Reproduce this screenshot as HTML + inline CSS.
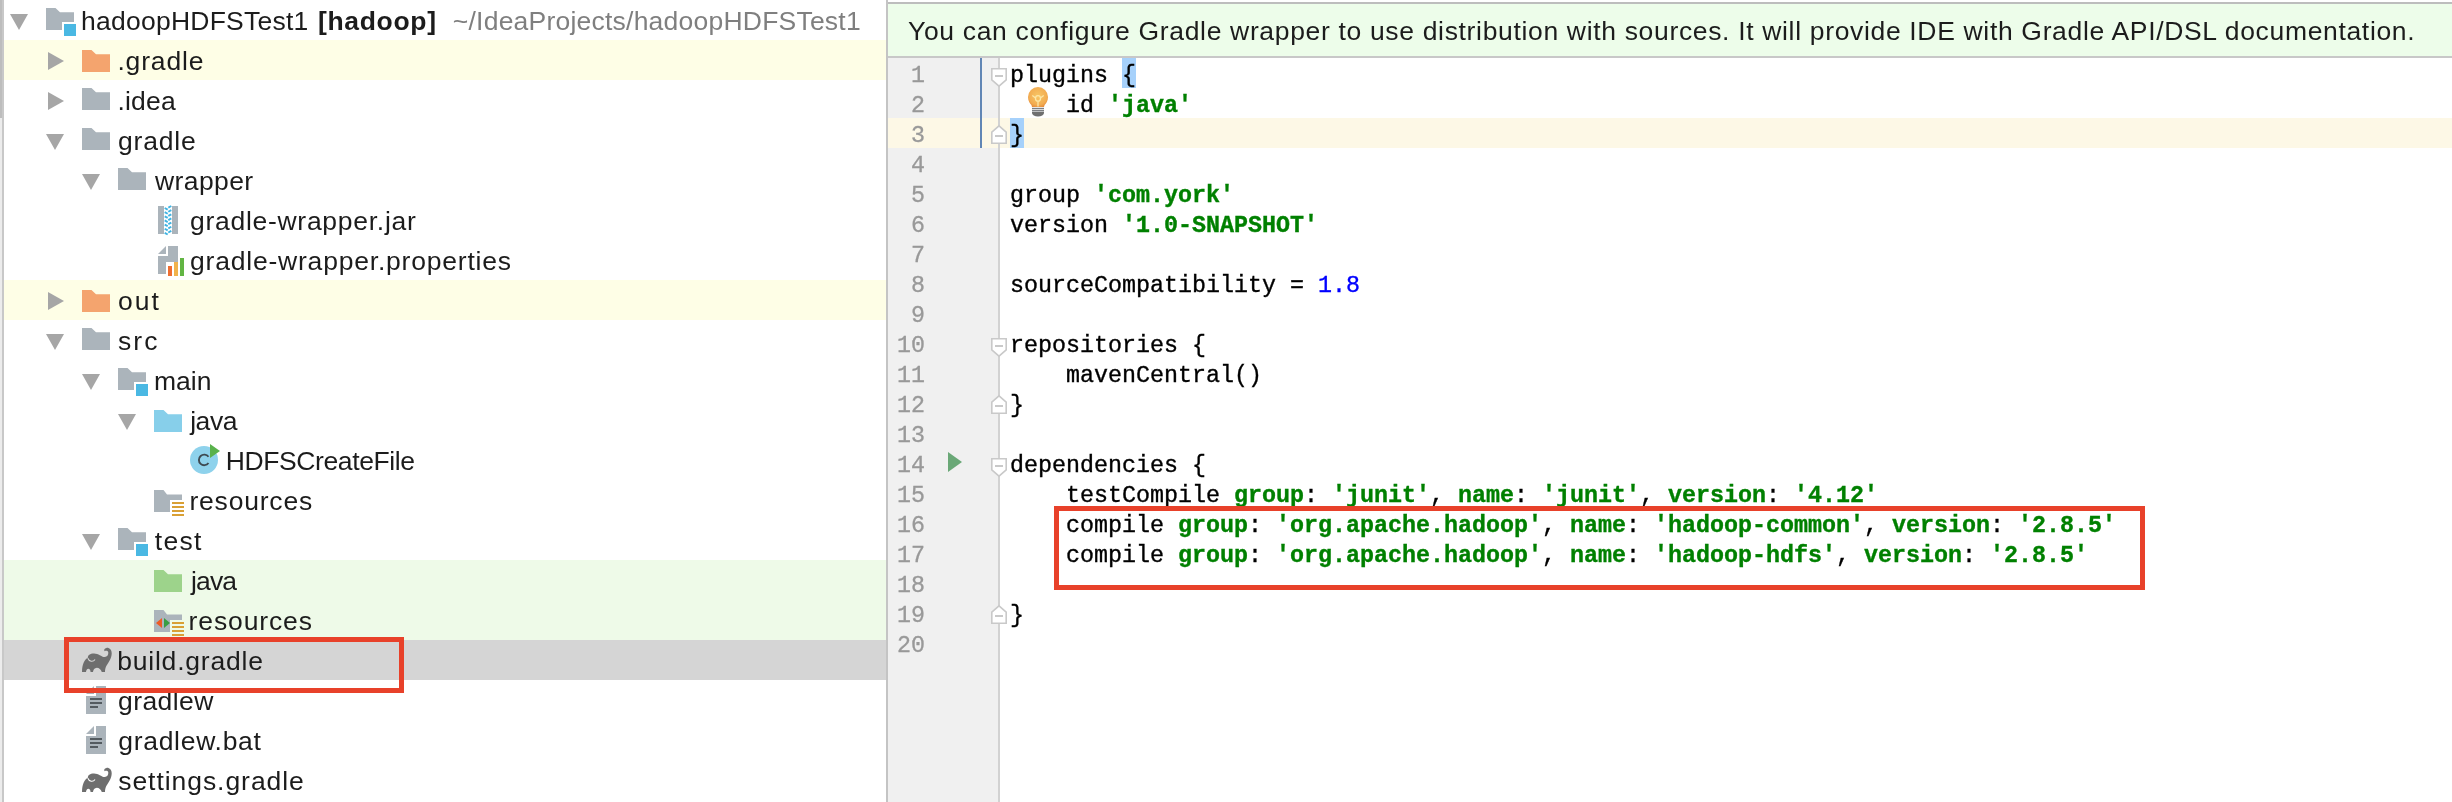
<!DOCTYPE html>
<html><head><meta charset="utf-8"><title>IDE</title>
<style>html,body{margin:0;padding:0}body{width:2452px;height:802px;overflow:hidden;position:relative;background:#fff}#r{position:absolute;left:0;top:0;width:2452px;height:802px;will-change:transform}b{font-weight:700}</style>
</head><body><div id="r">
<div style="position:absolute;left:0px;top:0px;width:2px;height:118px;background:#bdbdbd;"></div><div style="position:absolute;left:0px;top:118px;width:2px;height:684px;background:#ececec;"></div><div style="position:absolute;left:2px;top:0px;width:2px;height:802px;background:#c8c8c8;"></div><div style="position:absolute;left:4px;top:40px;width:882px;height:40px;background:#fefee6;"></div><div style="position:absolute;left:4px;top:280px;width:882px;height:40px;background:#fefee6;"></div><div style="position:absolute;left:4px;top:560px;width:882px;height:80px;background:#eefae8;"></div><div style="position:absolute;left:4px;top:640px;width:882px;height:40px;background:#d5d5d5;"></div><div style="position:absolute;left:886px;top:0px;width:2px;height:802px;background:#c4c4c4;"></div><svg style="position:absolute;left:0;top:0" width="886" height="802"><path d="M10 14h18l-9 16z" fill="#a6a6a6"/><path d="M46 8h9.5l4.5 4.2h14v9.8h-12v8h-16z" fill="#abb4bb"/><rect x="64" y="24" width="12" height="12" fill="#4ab8e3"/><path d="M48 52v18l16 -9z" fill="#a6a6a6"/><path d="M82 50h9.5l4.5 4.2h14v17.8h-28z" fill="#f4a46e"/><path d="M48 92v18l16 -9z" fill="#a6a6a6"/><path d="M82 88h9.5l4.5 4.2h14v17.8h-28z" fill="#abb4bb"/><path d="M46 134h18l-9 16z" fill="#a6a6a6"/><path d="M82 128h9.5l4.5 4.2h14v17.8h-28z" fill="#abb4bb"/><path d="M82 174h18l-9 16z" fill="#a6a6a6"/><path d="M118 168h9.5l4.5 4.2h14v17.8h-28z" fill="#abb4bb"/><rect x="158" y="206" width="6" height="28" fill="#abb4bb"/><rect x="172" y="206" width="6" height="28" fill="#abb4bb"/><path d="M164.7 208.0l3 1.6" stroke="#3fb4e3" stroke-width="1.9"/><path d="M164.7 212.15l3 1.6" stroke="#3fb4e3" stroke-width="1.9"/><path d="M164.7 216.3l3 1.6" stroke="#3fb4e3" stroke-width="1.9"/><path d="M164.7 220.45l3 1.6" stroke="#3fb4e3" stroke-width="1.9"/><path d="M164.7 224.6l3 1.6" stroke="#3fb4e3" stroke-width="1.9"/><path d="M164.7 228.75l3 1.6" stroke="#3fb4e3" stroke-width="1.9"/><path d="M164.7 232.9l3 1.6" stroke="#3fb4e3" stroke-width="1.9"/><path d="M168.3 207.6l3 -1.6" stroke="#3fb4e3" stroke-width="1.9"/><path d="M168.3 211.75l3 -1.6" stroke="#3fb4e3" stroke-width="1.9"/><path d="M168.3 215.9l3 -1.6" stroke="#3fb4e3" stroke-width="1.9"/><path d="M168.3 220.04999999999998l3 -1.6" stroke="#3fb4e3" stroke-width="1.9"/><path d="M168.3 224.2l3 -1.6" stroke="#3fb4e3" stroke-width="1.9"/><path d="M168.3 228.35l3 -1.6" stroke="#3fb4e3" stroke-width="1.9"/><path d="M168.3 232.5l3 -1.6" stroke="#3fb4e3" stroke-width="1.9"/><path d="M158 254l8 -8v8z" fill="#abb4bb"/><path d="M168 246h10v16h-12v12h-8v-18h10z" fill="#abb4bb"/><rect x="168" y="266" width="4" height="10" fill="#ee6e32"/><rect x="174" y="262" width="4" height="14" fill="#f1b34c"/><rect x="180" y="258" width="4" height="18" fill="#62b543"/><path d="M48 292v18l16 -9z" fill="#a6a6a6"/><path d="M82 290h9.5l4.5 4.2h14v17.8h-28z" fill="#f4a46e"/><path d="M46 334h18l-9 16z" fill="#a6a6a6"/><path d="M82 328h9.5l4.5 4.2h14v17.8h-28z" fill="#abb4bb"/><path d="M82 374h18l-9 16z" fill="#a6a6a6"/><path d="M118 368h9.5l4.5 4.2h14v9.8h-12v8h-16z" fill="#abb4bb"/><rect x="136" y="384" width="12" height="12" fill="#4ab8e3"/><path d="M118 414h18l-9 16z" fill="#a6a6a6"/><path d="M154 410h9.5l4.5 4.2h14v17.8h-28z" fill="#87cfea"/><circle cx="204" cy="460" r="14" fill="#8ed2ec"/><path d="M208.5 456.8a5.3 5.3 0 1 0 0 6.2" fill="none" stroke="#3e4a52" stroke-width="1.9"/><path d="M210 444l10 7l-10 7z" fill="#59b24c"/><path d="M154 490h9.5l3.5 4.5h15v5.5h-12v12h-16z" fill="#abb4bb"/><rect x="172" y="502" width="12" height="2" fill="#d9a035"/><rect x="172" y="506" width="12" height="2" fill="#d9a035"/><rect x="172" y="510" width="12" height="2" fill="#d9a035"/><rect x="172" y="514" width="12" height="2" fill="#d9a035"/><path d="M82 534h18l-9 16z" fill="#a6a6a6"/><path d="M118 528h9.5l4.5 4.2h14v9.8h-12v8h-16z" fill="#abb4bb"/><rect x="136" y="544" width="12" height="12" fill="#4ab8e3"/><path d="M154 570h9.5l4.5 4.2h14v17.8h-28z" fill="#9dd38b"/><path d="M154 610h9.5l3.5 4.5h15v5.5h-12v12h-16z" fill="#abb4bb"/><rect x="172" y="622" width="12" height="2" fill="#d9a035"/><rect x="172" y="626" width="12" height="2" fill="#d9a035"/><rect x="172" y="630" width="12" height="2" fill="#d9a035"/><rect x="172" y="634" width="12" height="2" fill="#d9a035"/><path d="M156 623l6 -5v10z" fill="#ee5a24"/><path d="M170 623l-6 -5v10z" fill="#389e43"/><g transform="translate(0 0)"><path d="M82 672 C82 665 84 660 88 657.6 C87.6 655 90 653.4 94 653.4 C98.5 653.4 101.5 656.8 104.5 657 C107 657.2 108.4 655 108.3 652.8 C108.2 651 106.5 650.4 104.6 651.2 C103.8 650 104.2 648.2 106.5 647.9 C109.5 647.6 111.8 650 111.7 653.5 C111.6 658.5 108.5 662.5 106.3 666 C105.3 667.8 105 670 105 672 H101.8 C101 669.5 99 667.8 96.8 667.8 C94.5 667.8 93.2 670 93 672 H90.6 C90.4 670 89.5 668.8 88.3 668.8 C87 668.8 86.2 670.5 86 672 Z" fill="#6e6e6e"/><path d="M87.8 658.2 C89 661.8 93.2 662.2 95 659.5" fill="none" stroke="#d5d5d5" stroke-width="1.1"/></g><path d="M86 694l8 -8v8z" fill="#abb4bb"/><path d="M96 686h10v28h-20v-18h10z" fill="#abb4bb"/><rect x="90" y="698" width="12" height="2" fill="#545b60"/><rect x="90" y="702" width="12" height="2" fill="#545b60"/><rect x="90" y="706" width="8" height="2" fill="#545b60"/><path d="M86 734l8 -8v8z" fill="#abb4bb"/><path d="M96 726h10v28h-20v-18h10z" fill="#abb4bb"/><rect x="90" y="738" width="12" height="2" fill="#545b60"/><rect x="90" y="742" width="12" height="2" fill="#545b60"/><rect x="90" y="746" width="8" height="2" fill="#545b60"/><g transform="translate(0 120)"><path d="M82 672 C82 665 84 660 88 657.6 C87.6 655 90 653.4 94 653.4 C98.5 653.4 101.5 656.8 104.5 657 C107 657.2 108.4 655 108.3 652.8 C108.2 651 106.5 650.4 104.6 651.2 C103.8 650 104.2 648.2 106.5 647.9 C109.5 647.6 111.8 650 111.7 653.5 C111.6 658.5 108.5 662.5 106.3 666 C105.3 667.8 105 670 105 672 H101.8 C101 669.5 99 667.8 96.8 667.8 C94.5 667.8 93.2 670 93 672 H90.6 C90.4 670 89.5 668.8 88.3 668.8 C87 668.8 86.2 670.5 86 672 Z" fill="#6e6e6e"/><path d="M87.8 658.2 C89 661.8 93.2 662.2 95 659.5" fill="none" stroke="#ffffff" stroke-width="1.1"/></g></svg><div style="position:absolute;left:81.00px;top:1px;height:40px;line-height:40px;font-family:'Liberation Sans',sans-serif;font-size:26.5px;white-space:pre;color:#1c1c1c;letter-spacing:0.243px;">hadoopHDFSTest1</div><div style="position:absolute;left:318.00px;top:1px;height:40px;line-height:40px;font-family:'Liberation Sans',sans-serif;font-size:26.5px;white-space:pre;color:#1c1c1c;letter-spacing:0.662px;font-weight:700;">[hadoop]</div><div style="position:absolute;left:452.80px;top:1px;height:40px;line-height:40px;font-family:'Liberation Sans',sans-serif;font-size:26.5px;white-space:pre;color:#7f7f7f;letter-spacing:0.223px;">~/IdeaProjects/hadoopHDFSTest1</div><div style="position:absolute;left:117.40px;top:41px;height:40px;line-height:40px;font-family:'Liberation Sans',sans-serif;font-size:26.5px;white-space:pre;color:#1c1c1c;letter-spacing:0.832px;">.gradle</div><div style="position:absolute;left:117.40px;top:81px;height:40px;line-height:40px;font-family:'Liberation Sans',sans-serif;font-size:26.5px;white-space:pre;color:#1c1c1c;letter-spacing:0.200px;">.idea</div><div style="position:absolute;left:118.00px;top:121px;height:40px;line-height:40px;font-family:'Liberation Sans',sans-serif;font-size:26.5px;white-space:pre;color:#1c1c1c;letter-spacing:0.800px;">gradle</div><div style="position:absolute;left:155.00px;top:161px;height:40px;line-height:40px;font-family:'Liberation Sans',sans-serif;font-size:26.5px;white-space:pre;color:#1c1c1c;letter-spacing:0.402px;">wrapper</div><div style="position:absolute;left:190.00px;top:201px;height:40px;line-height:40px;font-family:'Liberation Sans',sans-serif;font-size:26.5px;white-space:pre;color:#1c1c1c;letter-spacing:0.718px;">gradle-wrapper.jar</div><div style="position:absolute;left:190.00px;top:241px;height:40px;line-height:40px;font-family:'Liberation Sans',sans-serif;font-size:26.5px;white-space:pre;color:#1c1c1c;letter-spacing:0.796px;">gradle-wrapper.properties</div><div style="position:absolute;left:118.00px;top:281px;height:40px;line-height:40px;font-family:'Liberation Sans',sans-serif;font-size:26.5px;white-space:pre;color:#1c1c1c;letter-spacing:2.000px;">out</div><div style="position:absolute;left:118.00px;top:321px;height:40px;line-height:40px;font-family:'Liberation Sans',sans-serif;font-size:26.5px;white-space:pre;color:#1c1c1c;letter-spacing:2.100px;">src</div><div style="position:absolute;left:154.00px;top:361px;height:40px;line-height:40px;font-family:'Liberation Sans',sans-serif;font-size:26.5px;white-space:pre;color:#1c1c1c;letter-spacing:0.003px;">main</div><div style="position:absolute;left:190.20px;top:401px;height:40px;line-height:40px;font-family:'Liberation Sans',sans-serif;font-size:26.5px;white-space:pre;color:#1c1c1c;letter-spacing:-0.462px;">java</div><div style="position:absolute;left:225.80px;top:441px;height:40px;line-height:40px;font-family:'Liberation Sans',sans-serif;font-size:26.5px;white-space:pre;color:#1c1c1c;letter-spacing:-0.400px;">HDFSCreateFile</div><div style="position:absolute;left:189.40px;top:481px;height:40px;line-height:40px;font-family:'Liberation Sans',sans-serif;font-size:26.5px;white-space:pre;color:#1c1c1c;letter-spacing:0.808px;">resources</div><div style="position:absolute;left:154.80px;top:521px;height:40px;line-height:40px;font-family:'Liberation Sans',sans-serif;font-size:26.5px;white-space:pre;color:#1c1c1c;letter-spacing:1.270px;">test</div><div style="position:absolute;left:191.00px;top:561px;height:40px;line-height:40px;font-family:'Liberation Sans',sans-serif;font-size:26.5px;white-space:pre;color:#1c1c1c;letter-spacing:-0.871px;">java</div><div style="position:absolute;left:188.60px;top:601px;height:40px;line-height:40px;font-family:'Liberation Sans',sans-serif;font-size:26.5px;white-space:pre;color:#1c1c1c;letter-spacing:0.875px;">resources</div><div style="position:absolute;left:117.20px;top:641px;height:40px;line-height:40px;font-family:'Liberation Sans',sans-serif;font-size:26.5px;white-space:pre;color:#1c1c1c;letter-spacing:0.793px;">build.gradle</div><div style="position:absolute;left:118.00px;top:681px;height:40px;line-height:40px;font-family:'Liberation Sans',sans-serif;font-size:26.5px;white-space:pre;color:#1c1c1c;letter-spacing:0.435px;">gradlew</div><div style="position:absolute;left:118.20px;top:721px;height:40px;line-height:40px;font-family:'Liberation Sans',sans-serif;font-size:26.5px;white-space:pre;color:#1c1c1c;letter-spacing:0.720px;">gradlew.bat</div><div style="position:absolute;left:118.20px;top:761px;height:40px;line-height:40px;font-family:'Liberation Sans',sans-serif;font-size:26.5px;white-space:pre;color:#1c1c1c;letter-spacing:0.949px;">settings.gradle</div><div style="position:absolute;left:64px;top:637px;width:330px;height:46px;border:5px solid #e8412a"></div><div style="position:absolute;left:888px;top:0px;width:1564px;height:2px;background:#ffffff;"></div><div style="position:absolute;left:888px;top:2px;width:1564px;height:2px;background:#bdbdbd;"></div><div style="position:absolute;left:888px;top:4px;width:1564px;height:52px;background:#edfdea;"></div><div style="position:absolute;left:888px;top:56px;width:1564px;height:2px;background:#c8c8c8;"></div><div style="position:absolute;left:908.00px;top:11px;line-height:40px;font-family:'Liberation Sans',sans-serif;font-size:26.5px;letter-spacing:0.665px;white-space:pre;color:#1c1c1c">You can configure Gradle wrapper to use distribution with sources. It will provide IDE with Gradle API/DSL documentation.</div><div style="position:absolute;left:888px;top:58px;width:110px;height:744px;background:#f0f0f0;"></div><div style="position:absolute;left:888px;top:118px;width:1564px;height:30px;background:#fdf8e6;"></div><div style="position:absolute;left:1122px;top:58px;width:14px;height:30px;background:#a6d1fb;"></div><div style="position:absolute;left:1010px;top:118px;width:14px;height:30px;background:#a6d1fb;"></div><div style="position:absolute;left:980px;top:58px;width:2px;height:90px;background:#6186b5;"></div><div style="position:absolute;left:998px;top:58px;width:2px;height:744px;background:#d2d2d2;"></div><div style="position:absolute;right:1527px;top:61px;line-height:30px;font-family:'Liberation Mono',monospace;font-size:23.33px;color:#999999;-webkit-text-stroke:0.3px">1</div><div style="position:absolute;right:1527px;top:91px;line-height:30px;font-family:'Liberation Mono',monospace;font-size:23.33px;color:#999999;-webkit-text-stroke:0.3px">2</div><div style="position:absolute;right:1527px;top:121px;line-height:30px;font-family:'Liberation Mono',monospace;font-size:23.33px;color:#999999;-webkit-text-stroke:0.3px">3</div><div style="position:absolute;right:1527px;top:151px;line-height:30px;font-family:'Liberation Mono',monospace;font-size:23.33px;color:#999999;-webkit-text-stroke:0.3px">4</div><div style="position:absolute;right:1527px;top:181px;line-height:30px;font-family:'Liberation Mono',monospace;font-size:23.33px;color:#999999;-webkit-text-stroke:0.3px">5</div><div style="position:absolute;right:1527px;top:211px;line-height:30px;font-family:'Liberation Mono',monospace;font-size:23.33px;color:#999999;-webkit-text-stroke:0.3px">6</div><div style="position:absolute;right:1527px;top:241px;line-height:30px;font-family:'Liberation Mono',monospace;font-size:23.33px;color:#999999;-webkit-text-stroke:0.3px">7</div><div style="position:absolute;right:1527px;top:271px;line-height:30px;font-family:'Liberation Mono',monospace;font-size:23.33px;color:#999999;-webkit-text-stroke:0.3px">8</div><div style="position:absolute;right:1527px;top:301px;line-height:30px;font-family:'Liberation Mono',monospace;font-size:23.33px;color:#999999;-webkit-text-stroke:0.3px">9</div><div style="position:absolute;right:1527px;top:331px;line-height:30px;font-family:'Liberation Mono',monospace;font-size:23.33px;color:#999999;-webkit-text-stroke:0.3px">10</div><div style="position:absolute;right:1527px;top:361px;line-height:30px;font-family:'Liberation Mono',monospace;font-size:23.33px;color:#999999;-webkit-text-stroke:0.3px">11</div><div style="position:absolute;right:1527px;top:391px;line-height:30px;font-family:'Liberation Mono',monospace;font-size:23.33px;color:#999999;-webkit-text-stroke:0.3px">12</div><div style="position:absolute;right:1527px;top:421px;line-height:30px;font-family:'Liberation Mono',monospace;font-size:23.33px;color:#999999;-webkit-text-stroke:0.3px">13</div><div style="position:absolute;right:1527px;top:451px;line-height:30px;font-family:'Liberation Mono',monospace;font-size:23.33px;color:#999999;-webkit-text-stroke:0.3px">14</div><div style="position:absolute;right:1527px;top:481px;line-height:30px;font-family:'Liberation Mono',monospace;font-size:23.33px;color:#999999;-webkit-text-stroke:0.3px">15</div><div style="position:absolute;right:1527px;top:511px;line-height:30px;font-family:'Liberation Mono',monospace;font-size:23.33px;color:#999999;-webkit-text-stroke:0.3px">16</div><div style="position:absolute;right:1527px;top:541px;line-height:30px;font-family:'Liberation Mono',monospace;font-size:23.33px;color:#999999;-webkit-text-stroke:0.3px">17</div><div style="position:absolute;right:1527px;top:571px;line-height:30px;font-family:'Liberation Mono',monospace;font-size:23.33px;color:#999999;-webkit-text-stroke:0.3px">18</div><div style="position:absolute;right:1527px;top:601px;line-height:30px;font-family:'Liberation Mono',monospace;font-size:23.33px;color:#999999;-webkit-text-stroke:0.3px">19</div><div style="position:absolute;right:1527px;top:631px;line-height:30px;font-family:'Liberation Mono',monospace;font-size:23.33px;color:#999999;-webkit-text-stroke:0.3px">20</div><div style="position:absolute;left:1010px;top:58px;height:30px;line-height:30px;font-family:'Liberation Mono',monospace;font-size:23.33px;white-space:pre;color:#000;-webkit-text-stroke:0.35px"><div style="position:relative;top:3px">plugins {</div></div><div style="position:absolute;left:1010px;top:88px;height:30px;line-height:30px;font-family:'Liberation Mono',monospace;font-size:23.33px;white-space:pre;color:#000;-webkit-text-stroke:0.35px"><div style="position:relative;top:3px">    id <b style="color:#008000">'java'</b></div></div><div style="position:absolute;left:1010px;top:118px;height:30px;line-height:30px;font-family:'Liberation Mono',monospace;font-size:23.33px;white-space:pre;color:#000;-webkit-text-stroke:0.35px"><div style="position:relative;top:3px">}</div></div><div style="position:absolute;left:1010px;top:178px;height:30px;line-height:30px;font-family:'Liberation Mono',monospace;font-size:23.33px;white-space:pre;color:#000;-webkit-text-stroke:0.35px"><div style="position:relative;top:3px">group <b style="color:#008000">'com.york'</b></div></div><div style="position:absolute;left:1010px;top:208px;height:30px;line-height:30px;font-family:'Liberation Mono',monospace;font-size:23.33px;white-space:pre;color:#000;-webkit-text-stroke:0.35px"><div style="position:relative;top:3px">version <b style="color:#008000">'1.0-SNAPSHOT'</b></div></div><div style="position:absolute;left:1010px;top:268px;height:30px;line-height:30px;font-family:'Liberation Mono',monospace;font-size:23.33px;white-space:pre;color:#000;-webkit-text-stroke:0.35px"><div style="position:relative;top:3px">sourceCompatibility = <span style="color:#0000ff">1.8</span></div></div><div style="position:absolute;left:1010px;top:328px;height:30px;line-height:30px;font-family:'Liberation Mono',monospace;font-size:23.33px;white-space:pre;color:#000;-webkit-text-stroke:0.35px"><div style="position:relative;top:3px">repositories {</div></div><div style="position:absolute;left:1010px;top:358px;height:30px;line-height:30px;font-family:'Liberation Mono',monospace;font-size:23.33px;white-space:pre;color:#000;-webkit-text-stroke:0.35px"><div style="position:relative;top:3px">    mavenCentral()</div></div><div style="position:absolute;left:1010px;top:388px;height:30px;line-height:30px;font-family:'Liberation Mono',monospace;font-size:23.33px;white-space:pre;color:#000;-webkit-text-stroke:0.35px"><div style="position:relative;top:3px">}</div></div><div style="position:absolute;left:1010px;top:448px;height:30px;line-height:30px;font-family:'Liberation Mono',monospace;font-size:23.33px;white-space:pre;color:#000;-webkit-text-stroke:0.35px"><div style="position:relative;top:3px">dependencies {</div></div><div style="position:absolute;left:1010px;top:478px;height:30px;line-height:30px;font-family:'Liberation Mono',monospace;font-size:23.33px;white-space:pre;color:#000;-webkit-text-stroke:0.35px"><div style="position:relative;top:3px">    testCompile <b style="color:#008000">group</b>: <b style="color:#008000">'junit'</b>, <b style="color:#008000">name</b>: <b style="color:#008000">'junit'</b>, <b style="color:#008000">version</b>: <b style="color:#008000">'4.12'</b></div></div><div style="position:absolute;left:1010px;top:508px;height:30px;line-height:30px;font-family:'Liberation Mono',monospace;font-size:23.33px;white-space:pre;color:#000;-webkit-text-stroke:0.35px"><div style="position:relative;top:3px">    compile <b style="color:#008000">group</b>: <b style="color:#008000">'org.apache.hadoop'</b>, <b style="color:#008000">name</b>: <b style="color:#008000">'hadoop-common'</b>, <b style="color:#008000">version</b>: <b style="color:#008000">'2.8.5'</b></div></div><div style="position:absolute;left:1010px;top:538px;height:30px;line-height:30px;font-family:'Liberation Mono',monospace;font-size:23.33px;white-space:pre;color:#000;-webkit-text-stroke:0.35px"><div style="position:relative;top:3px">    compile <b style="color:#008000">group</b>: <b style="color:#008000">'org.apache.hadoop'</b>, <b style="color:#008000">name</b>: <b style="color:#008000">'hadoop-hdfs'</b>, <b style="color:#008000">version</b>: <b style="color:#008000">'2.8.5'</b></div></div><div style="position:absolute;left:1010px;top:598px;height:30px;line-height:30px;font-family:'Liberation Mono',monospace;font-size:23.33px;white-space:pre;color:#000;-webkit-text-stroke:0.35px"><div style="position:relative;top:3px">}</div></div><svg style="position:absolute;left:0;top:0" width="2452" height="802"><path d="M991.8 68.8h14.4v11l-7.2 6.4l-7.2 -6.4z" fill="#fff" stroke="#c9c9c9" stroke-width="1.6"/><rect x="995" y="75" width="8" height="2" fill="#c9c9c9"/><path d="M991.8 338.8h14.4v11l-7.2 6.4l-7.2 -6.4z" fill="#fff" stroke="#c9c9c9" stroke-width="1.6"/><rect x="995" y="345" width="8" height="2" fill="#c9c9c9"/><path d="M991.8 458.8h14.4v11l-7.2 6.4l-7.2 -6.4z" fill="#fff" stroke="#c9c9c9" stroke-width="1.6"/><rect x="995" y="465" width="8" height="2" fill="#c9c9c9"/><path d="M991.8 143.2h14.4v-11l-7.2 -6.4l-7.2 6.4z" fill="#fff" stroke="#c9c9c9" stroke-width="1.6"/><rect x="995" y="135" width="8" height="2" fill="#c9c9c9"/><path d="M991.8 413.2h14.4v-11l-7.2 -6.4l-7.2 6.4z" fill="#fff" stroke="#c9c9c9" stroke-width="1.6"/><rect x="995" y="405" width="8" height="2" fill="#c9c9c9"/><path d="M991.8 623.2h14.4v-11l-7.2 -6.4l-7.2 6.4z" fill="#fff" stroke="#c9c9c9" stroke-width="1.6"/><rect x="995" y="615" width="8" height="2" fill="#c9c9c9"/><path d="M948 452v20l14 -10z" fill="#6aa877"/><defs><radialGradient id="bulb" cx="0.5" cy="0.45" r="0.6"><stop offset="0" stop-color="#f8c665"/><stop offset="0.75" stop-color="#f2ad52"/><stop offset="1" stop-color="#e58b3a"/></radialGradient></defs><path d="M1028 97 A10 10 0 0 1 1048 97 C1048 101 1046 103.5 1044.6 105 L1044 107 H1032 L1031.4 105 C1030 103.5 1028 101 1028 97 Z" fill="url(#bulb)"/><path d="M1032.3 95.4 L1035.6 97.9 M1043.7 95.4 L1040.4 97.9 M1038 101.2 V106.5" fill="none" stroke="#fde7a6" stroke-width="1.3"/><ellipse cx="1038" cy="98.4" rx="2.5" ry="2.8" fill="none" stroke="#fde7a6" stroke-width="1.3"/><rect x="1032" y="107.8" width="12" height="1.5" fill="#7d7f82"/><rect x="1032" y="110" width="12" height="1.5" fill="#7d7f82"/><path d="M1032 112 H1044 V113 A6 3.5 0 0 1 1032 113 Z" fill="#6f6f6f"/></svg><div style="position:absolute;left:1054px;top:506px;width:1081px;height:74px;border:5px solid #e8412a"></div>
</div></body></html>
